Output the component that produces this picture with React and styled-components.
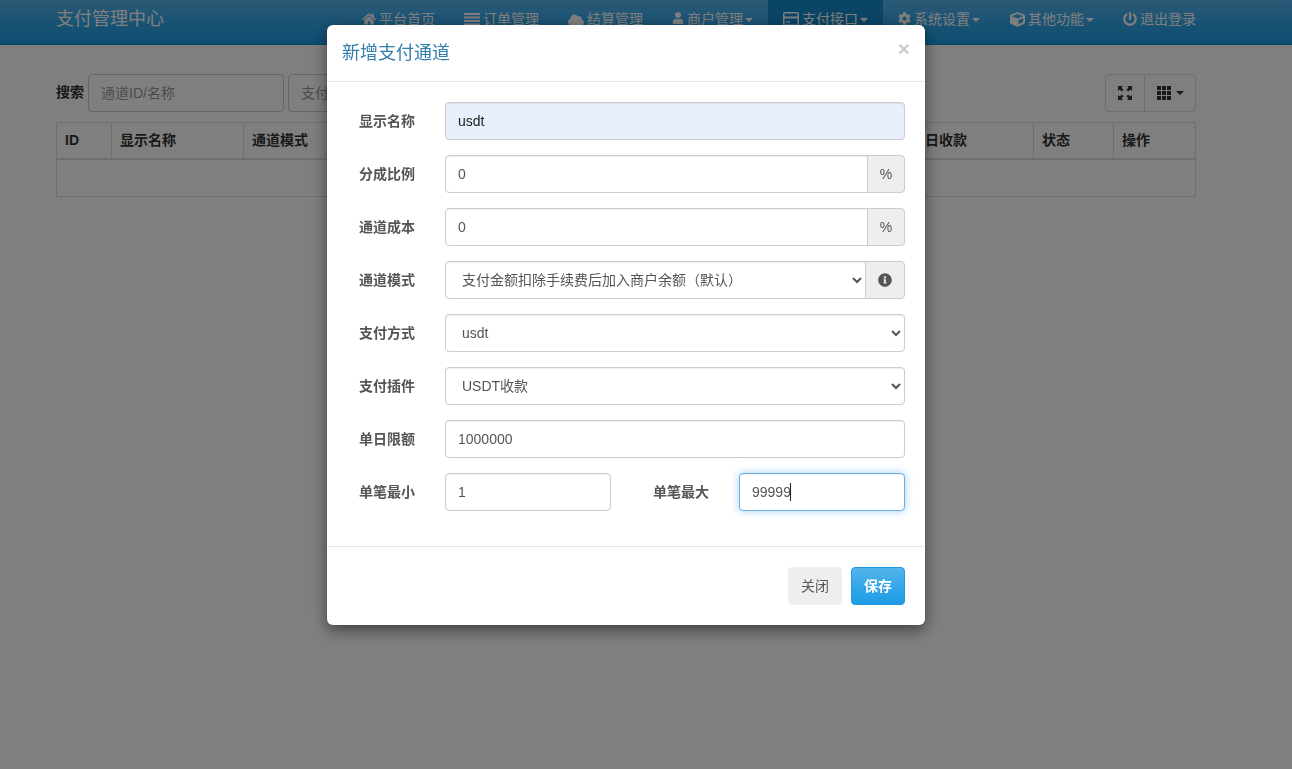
import React from 'react';
import styled, { createGlobalStyle } from 'styled-components';
import { FaHome, FaCloud, FaUser, FaCog, FaCube, FaPowerOff, FaInfoCircle } from 'react-icons/fa';

const font = '"Liberation Sans", "Noto Sans CJK SC", sans-serif';

const Global = createGlobalStyle`
  * { box-sizing: border-box; }
  html, body { margin: 0; height: 100%; overflow: hidden; background: #fff; }
  body { font-family: ${font}; font-size: 14px; line-height: 20px; color: #555; }
`;

const Navbar = styled.header`
  height: 45px;
  background: linear-gradient(#54b4eb, #2fa4e7 60%, #1d9ce5);
  border-bottom: 1px solid #178acc;
  padding: 0 96px 0 56px;
  display: flex;
  justify-content: space-between;
`;
const Brand = styled.div`
  font-size: 18px;
  line-height: 38px;
  color: #fff;
`;
const NavList = styled.nav`
  display: flex;
`;
const NavItem = styled.div`
  display: flex;
  align-items: flex-start;
  gap: 3px;
  height: 44px;
  padding: 9px 0 0 15px;
  width: ${p => p.$w}px;
  line-height: 20px;
  color: #fff;
  white-space: nowrap;
  background: ${p => (p.$active ? '#178acc' : 'transparent')};
  svg { flex: none; margin-top: 3px; }
`;
const Caret = styled.span`
  display: inline-block;
  width: 0;
  height: 0;
  margin: 9px 0 0 -1px;
  border-top: 4px solid #fff;
  border-left: 4px solid transparent;
  border-right: 4px solid transparent;
`;
const ToolCaret = styled.span`
  width: 0;
  height: 0;
  border-top: 4px solid #333;
  border-left: 4px solid transparent;
  border-right: 4px solid transparent;
`;

const Content = styled.main`
  padding: 29px 96px 0 56px;
`;
const Toolbar = styled.div`
  display: flex;
  align-items: center;
  height: 38px;
  gap: 4px;
`;
const SearchLabel = styled.label`
  font-weight: 700;
  color: #333;
  padding-bottom: 2px;
`;
const SearchInput = styled.input`
  width: ${p => p.$w}px;
  height: 38px;
  padding: 8px 12px;
  border: 1px solid #ccc;
  border-radius: 4px;
  font: 14px ${font};
  color: #555;
  &::placeholder { color: #999; }
`;
const BtnGroup = styled.div`
  display: flex;
  margin-left: auto;
`;
const ToolBtn = styled.div`
  display: flex;
  align-items: center;
  justify-content: center;
  gap: 5px;
  width: ${p => p.$w}px;
  height: 38px;
  border: 1px solid #ddd;
  margin-left: ${p => (p.$first ? 0 : '-1px')};
  border-radius: ${p => (p.$first ? '4px 0 0 4px' : '0 4px 4px 0')};
  color: #333;
`;
const Table = styled.table`
  width: 1139px;
  margin-top: 10px;
  table-layout: fixed;
  border-collapse: collapse;
  border: 1px solid #ddd;
`;
const Th = styled.th`
  width: ${p => p.$w}px;
  height: 36px;
  padding: 0 8px;
  border: 1px solid #ddd;
  border-bottom-width: 2px;
  text-align: left;
  font-weight: 700;
  color: #333;
`;
const Td = styled.td`
  height: 38px;
  background: #fff;
  border: 1px solid #ddd;
`;

const Backdrop = styled.div`
  position: fixed;
  inset: 0;
  background: rgba(0, 0, 0, 0.5);
`;
const ModalLayer = styled.div`
  position: fixed;
  inset: 0;
  display: flex;
  justify-content: center;
  align-items: flex-start;
  padding: 25px 40px 0 0;
`;
const Modal = styled.section`
  width: 598px;
  background: #fff;
  border-radius: 6px;
  box-shadow: 0 5px 15px rgba(0, 0, 0, 0.5);
`;
const ModalHeader = styled.div`
  display: flex;
  align-items: center;
  justify-content: space-between;
  height: 57px;
  padding: 0 15px;
  border-bottom: 1px solid #e5e5e5;
`;
const ModalTitle = styled.h4`
  margin: 0;
  font-size: 18px;
  font-weight: 400;
  line-height: 54px;
  color: #317eac;
`;
const Close = styled.span`
  font-size: 21px;
  font-weight: 700;
  line-height: 1;
  color: #000;
  opacity: 0.2;
  padding-bottom: 10px;
  text-shadow: 0 1px 0 #fff;
`;
const ModalBody = styled.div`
  padding: 20px 20px 15px 32px;
  height: 465px;
  display: flex;
  flex-direction: column;
  gap: 15px;
  border-bottom: 1px solid #e5e5e5;
`;
const Row = styled.div`
  display: flex;
  align-items: center;
  height: 38px;
`;
const Label = styled.label`
  flex: none;
  width: 86px;
  margin-left: ${p => p.$gap || 0}px;
  font-weight: 700;
  color: #555;
`;
const Group = styled.div`
  flex: 1;
  display: flex;
  min-width: 0;
`;
const Input = styled.input`
  flex: 1;
  min-width: 0;
  width: 100%;
  height: 38px;
  padding: 8px 12px;
  border: 1px solid #ccc;
  border-radius: ${p => (p.$attached ? '4px 0 0 4px' : '4px')};
  background: ${p => (p.$filled ? '#e8f0fe' : '#fff')};
  font: 14px ${font};
  color: ${p => (p.$filled ? '#222' : '#555')};
  box-shadow: inset 0 1px 1px rgba(0, 0, 0, 0.075);
  outline: none;
`;
const FocusedInput = styled(Input)`
  border-color: #66afe9;
  box-shadow: inset 0 1px 1px rgba(0, 0, 0, 0.075), 0 0 8px rgba(102, 175, 233, 0.6);
`;
const Select = styled.select`
  flex: 1;
  min-width: 0;
  width: 100%;
  height: 38px;
  padding: 8px 12px;
  border: 1px solid #ccc;
  border-radius: ${p => (p.$attached ? '4px 0 0 4px' : '4px')};
  background-color: #fff;
  font: 14px ${font};
  color: #555;
  box-shadow: inset 0 1px 1px rgba(0, 0, 0, 0.075);
  outline: none;
`;
const Addon = styled.span`
  flex: none;
  display: flex;
  align-items: center;
  justify-content: center;
  width: ${p => p.$w}px;
  height: 38px;
  margin-left: -1px;
  border: 1px solid #ccc;
  border-radius: 0 4px 4px 0;
  background: #eee;
  color: #555;
`;
const SmallField = styled.div`
  position: relative;
  flex: none;
  width: 166px;
`;
const TextCaret = styled.span`
  position: absolute;
  left: 51px;
  top: 10px;
  width: 1px;
  height: 18px;
  background: #222;
`;
const ModalFooter = styled.div`
  display: flex;
  justify-content: flex-end;
  gap: 9px;
  padding: 20px 20px 20px 0;
`;
const Button = styled.button`
  height: 38px;
  width: 54px;
  padding: 0 0 2px;
  border: 1px solid ${p => (p.$primary ? '#1f9ae0' : '#eee')};
  border-radius: 4px;
  background: ${p => (p.$primary ? 'linear-gradient(#54b4eb, #2fa4e7 60%, #1d9ce5)' : '#eee')};
  color: ${p => (p.$primary ? '#fff' : '#555')};
  font: ${p => (p.$primary ? 700 : 400)} 14px ${font};
`;

const BarsIcon = () => (
  <svg width="16" height="14" viewBox="0 0 16 14" fill="currentColor">
    <rect y="1" width="16" height="2" />
    <rect y="4.5" width="16" height="2" />
    <rect y="8" width="16" height="2" />
    <rect y="11.5" width="16" height="2" />
  </svg>
);

const CardIcon = () => (
  <svg width="16" height="14" viewBox="0 0 16 14" fill="none" stroke="currentColor">
    <rect x="0.75" y="0.75" width="14.5" height="12.5" rx="1" strokeWidth="1.5" />
    <path d="M1 5.5h14" strokeWidth="2" />
    <path d="M3 10h4" strokeWidth="1.2" />
  </svg>
);

const FullscreenIcon = () => (
  <svg width="14" height="14" viewBox="0 0 14 14" fill="currentColor">
    <path d="M0 0h5L3.4 1.6 5.6 3.8 3.8 5.6 1.6 3.4 0 5z" />
    <path d="M14 0H9l1.6 1.6-2.2 2.2 1.8 1.8 2.2-2.2L14 5z" />
    <path d="M0 14h5l-1.6-1.6 2.2-2.2-1.8-1.8-2.2 2.2L0 9z" />
    <path d="M14 14H9l1.6-1.6-2.2-2.2 1.8-1.8 2.2 2.2L14 9z" />
  </svg>
);

const GridIcon = () => (
  <svg width="14" height="14" viewBox="0 0 14 14" fill="currentColor">
    {[0, 5, 10].flatMap(y => [0, 5, 10].map(x => (
      <rect key={`${x}-${y}`} x={x} y={y} width="4" height="4" />
    )))}
  </svg>
);

const navItems = [
  { w: 102, label: '平台首页', icon: <FaHome size={14} /> },
  { w: 104, label: '订单管理', icon: <BarsIcon /> },
  { w: 104, label: '结算管理', icon: <FaCloud size={16} /> },
  { w: 111, label: '商户管理', icon: <FaUser size={12} />, caret: true },
  { w: 115, label: '支付接口', icon: <CardIcon />, caret: true, active: true },
  { w: 112, label: '系统设置', icon: <FaCog size={13} />, caret: true },
  { w: 113, label: '其他功能', icon: <FaCube size={15} />, caret: true },
  { w: 88, label: '退出登录', icon: <FaPowerOff size={14} /> },
];

const columns = [
  ['ID', 55], ['显示名称', 132], ['通道模式', 132], ['支付方式', 132], ['支付插件', 132], ['通道成本', 132], ['单日限额', 131], ['今日收款', 131], ['状态', 80], ['操作', 82],
];

export default function App() {
  return (
    <>
      <Global />
      <Navbar>
        <Brand>支付管理中心</Brand>
        <NavList>
          {navItems.map(item => (
            <NavItem key={item.label} $w={item.w} $active={item.active}>
              {item.icon}
              <span>{item.label}</span>
              {item.caret && <Caret />}
            </NavItem>
          ))}
        </NavList>
      </Navbar>
      <Content>
        <Toolbar>
          <SearchLabel>搜索</SearchLabel>
          <SearchInput $w={196} placeholder="通道ID/名称" />
          <SearchInput $w={196} placeholder="支付方式" />
          <BtnGroup>
            <ToolBtn $first $w={40}><FullscreenIcon /></ToolBtn>
            <ToolBtn $w={52}><GridIcon /><ToolCaret /></ToolBtn>
          </BtnGroup>
        </Toolbar>
        <Table>
          <thead>
            <tr>{columns.map(([t, w]) => <Th key={t} $w={w}>{t}</Th>)}</tr>
          </thead>
          <tbody>
            <tr><Td colSpan={10} /></tr>
          </tbody>
        </Table>
      </Content>
      <Backdrop />
      <ModalLayer>
        <Modal>
          <ModalHeader>
            <ModalTitle>新增支付通道</ModalTitle>
            <Close>×</Close>
          </ModalHeader>
          <ModalBody>
            <Row><Label>显示名称</Label><Group><Input $filled readOnly value="usdt" /></Group></Row>
            <Row><Label>分成比例</Label><Group><Input $attached readOnly value="0" /><Addon $w={38}>%</Addon></Group></Row>
            <Row><Label>通道成本</Label><Group><Input $attached readOnly value="0" /><Addon $w={38}>%</Addon></Group></Row>
            <Row>
              <Label>通道模式</Label>
              <Group>
                <Select $attached defaultValue="a"><option value="a">支付金额扣除手续费后加入商户余额（默认）</option></Select>
                <Addon $w={40}><FaInfoCircle size={14} /></Addon>
              </Group>
            </Row>
            <Row><Label>支付方式</Label><Group><Select defaultValue="a"><option value="a">usdt</option></Select></Group></Row>
            <Row><Label>支付插件</Label><Group><Select defaultValue="a"><option value="a">USDT收款</option></Select></Group></Row>
            <Row><Label>单日限额</Label><Group><Input readOnly value="1000000" /></Group></Row>
            <Row>
              <Label>单笔最小</Label>
              <SmallField><Input readOnly value="1" /></SmallField>
              <Label $gap={42}>单笔最大</Label>
              <SmallField>
                <FocusedInput readOnly value="99999" />
                <TextCaret />
              </SmallField>
            </Row>
          </ModalBody>
          <ModalFooter>
            <Button>关闭</Button>
            <Button $primary>保存</Button>
          </ModalFooter>
        </Modal>
      </ModalLayer>
    </>
  );
}
